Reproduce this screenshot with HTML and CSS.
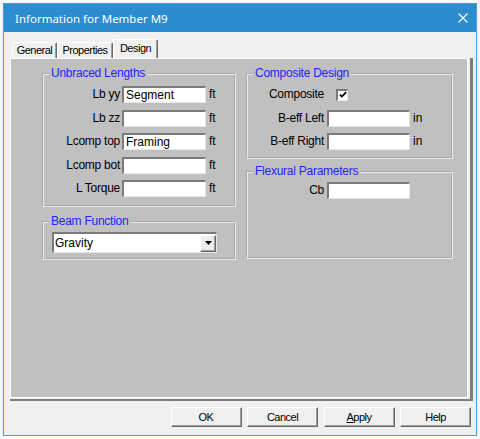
FILE: index.html
```html
<!DOCTYPE html>
<html>
<head>
<meta charset="utf-8">
<link rel="stylesheet" href="styles.css">
</head>
<body>
<div class="window">
  <div class="titlebar">
    <span class="title">Information for Member M9</span>
    <svg class="close" width="10" height="10" viewBox="0 0 10 10"><path d="M0.5 0.5L9.5 9.5M9.5 0.5L0.5 9.5" stroke="#fff" stroke-width="1.1" fill="none"/></svg>
  </div>
  <div class="client">
    <div class="tabs">
      <div class="tab t-general">General</div>
      <div class="tab t-props">Properties</div>
      <div class="tab t-design active">Design</div>
    </div>
    <div class="panel-wrap">
      <div class="panel">
        <div class="col col-left">
          <fieldset class="group unbraced">
            <legend>Unbraced Lengths</legend>
            <div class="form form-left">
              <label>Lb yy</label><input class="field" type="text" value="Segment"><span class="unit">ft</span>
              <label>Lb zz</label><input class="field" type="text" value=""><span class="unit">ft</span>
              <label>Lcomp top</label><input class="field" type="text" value="Framing"><span class="unit">ft</span>
              <label>Lcomp bot</label><input class="field" type="text" value=""><span class="unit">ft</span>
              <label>L Torque</label><input class="field" type="text" value=""><span class="unit">ft</span>
            </div>
          </fieldset>
          <fieldset class="group beam">
            <legend>Beam Function</legend>
            <div class="select">
              <span class="select-text">Gravity</span>
              <span class="drop"><svg width="7" height="4" viewBox="0 0 7 4"><path d="M0 0H7L3.5 4Z" fill="#000"/></svg></span>
            </div>
          </fieldset>
        </div>
        <div class="col col-right">
          <fieldset class="group composite">
            <legend>Composite Design</legend>
            <div class="form form-right">
              <label>Composite</label><span class="check"><svg width="8" height="8" viewBox="0 0 8 8"><path d="M0.8 3.6L2.8 5.6L7.2 1.2" stroke="#000" stroke-width="1.8" fill="none"/></svg></span><span></span>
              <label>B-eff Left</label><input class="field" type="text" value=""><span class="unit">in</span>
              <label>B-eff Right</label><input class="field" type="text" value=""><span class="unit">in</span>
            </div>
          </fieldset>
          <fieldset class="group flexural">
            <legend>Flexural Parameters</legend>
            <div class="form form-right flex-form">
              <label>Cb</label><input class="field" type="text" value=""><span></span>
            </div>
          </fieldset>
        </div>
      </div>
    </div>
    <div class="buttons">
      <div class="btn">OK</div>
      <div class="btn">Cancel</div>
      <div class="btn"><u>A</u>pply</div>
      <div class="btn">Help</div>
    </div>
  </div>
</div>
</body>
</html>
```
FILE: styles.css
```css
* { box-sizing: border-box; }
body {
  margin: 0;
  background: #ffffff;
  font-family: "Liberation Sans", Arial, sans-serif;
  color: #000;
}
.window {
  margin: 3px 0 0 3px;
  width: 474px;
  height: 433px;
  border: 1px solid #4a9fd9;
  background: #f0f0f0;
  display: flex;
  flex-direction: column;
  box-shadow: 0 1px 4px rgba(0,0,0,0.18);
}
.titlebar {
  height: 28px;
  flex: none;
  background: #2b8dcf;
  display: flex;
  align-items: center;
  justify-content: space-between;
  padding: 0 8px 0 11px;
  color: #fff;
  font-family: "Noto Sans", sans-serif;
  font-size: 11.5px;
}
.close { display: block; }
.client {
  flex: 1;
  padding: 7px 5px 0 6px;
}
.tabs {
  display: flex;
  align-items: flex-end;
  height: 19px;
  margin-left: 2px;
}
.tab {
  height: 16px;
  border-top: 1px solid #fff;
  border-left: 1px solid #fff;
  border-right: 1px solid #696969;
  box-shadow: inset -1px 0 0 #a0a0a0;
  border-radius: 2px 2px 0 0;
  font-size: 11px;
  letter-spacing: -0.5px;
  line-height: 15px;
  text-align: center;
  white-space: nowrap;
}
.t-general { width: 45px; }
.t-props { width: 56px; }
.t-design { width: 45px; }
.tab.active { height: 19px; line-height: 17px; }
.panel-wrap {
  width: 463px;
  height: 343px;
  border-right: 3px solid #7d7d7d;
  border-bottom: 2px solid #7d7d7d;
  padding: 0 2px 1px 0;
}
.panel {
  width: 458px;
  height: 340px;
  background: #c0c0c0;
  border: 1px solid #fff;
  display: flex;
  gap: 10px;
  padding: 7px 0 0 31px;
}
.col { display: flex; flex-direction: column; }
.col-left { width: 194px; }
.col-right { width: 207px; }
.group {
  margin: 0;
  padding: 0;
  min-width: 0;
  border: 1px solid;
  border-color: #a8a8a8 #ececec #ececec #a8a8a8;
  box-shadow: inset 1px 1px 0 #ececec, inset -1px -1px 0 #a8a8a8;
}
.group legend {
  margin-left: 6px;
  padding: 0 2px;
  font-size: 12px;
  letter-spacing: -0.25px;
  line-height: 15px;
  color: #2323ff;
  background: #c0c0c0;
}
.beam { margin-top: 7px; }
.flexural { margin-top: 5px; }
.form {
  display: grid;
  grid-auto-rows: 17px;
  row-gap: 6.5px;
  align-items: center;
}
.form-left {
  grid-template-columns: 77px 84px auto;
  column-gap: 2px;
  padding: 5px 0 9px 0;
}
.form-left .unit { margin-left: 1px; }
.form-right {
  grid-template-columns: 77px 83px auto;
  column-gap: 3px;
  padding: 5px 0 8px 0;
}
.flex-form { padding: 3px 0 59px 0; }
.form label {
  font-size: 12px;
  letter-spacing: -0.25px;
  line-height: 17px;
  text-align: right;
  white-space: nowrap;
}
.unit {
  font-size: 12px;
  line-height: 17px;
}
.field {
  width: 100%;
  height: 17px;
  margin: 0;
  border-style: solid;
  border-width: 2px 1px 1px 2px;
  border-color: #7a7a7a #e6e6e6 #e6e6e6 #7a7a7a;
  background: #fff;
  padding: 0 0 0 2px;
  font-family: "Liberation Sans", Arial, sans-serif;
  font-size: 12px;
  color: #000;
  outline: none;
}
.check {
  width: 12px;
  height: 12px;
  margin-left: 9px;
  border-style: solid;
  border-width: 2px 1px 1px 2px;
  border-color: #7a7a7a #e6e6e6 #e6e6e6 #7a7a7a;
  background: #fff;
  display: flex;
  align-items: center;
  justify-content: center;
}
.check svg { display: block; }
.select {
  margin: 3px 0 6px 9px;
  width: 165px;
  height: 21px;
  border-style: solid;
  border-width: 2px 1px 1px 2px;
  border-color: #7a7a7a #e6e6e6 #e6e6e6 #7a7a7a;
  background: #fff;
  display: flex;
  align-items: center;
  justify-content: space-between;
  padding-left: 1px;
  font-size: 12px;
}
.drop {
  width: 16px;
  height: 17px;
  background: #ececec;
  border: 1px solid;
  border-color: #fff #696969 #696969 #fff;
  box-shadow: inset -1px -1px 0 #a0a0a0;
  display: flex;
  align-items: center;
  justify-content: center;
}
.drop svg { display: block; }
.buttons {
  display: flex;
  justify-content: flex-end;
  gap: 5.5px;
  margin-top: 6px;
}
.btn {
  width: 71px;
  height: 20px;
  background: #f0f0f0;
  border: 1px solid;
  border-color: #fff #696969 #696969 #fff;
  box-shadow: inset -1px -1px 0 #a0a0a0;
  font-size: 11px;
  letter-spacing: -0.5px;
  line-height: 18px;
  text-align: center;
}
```
